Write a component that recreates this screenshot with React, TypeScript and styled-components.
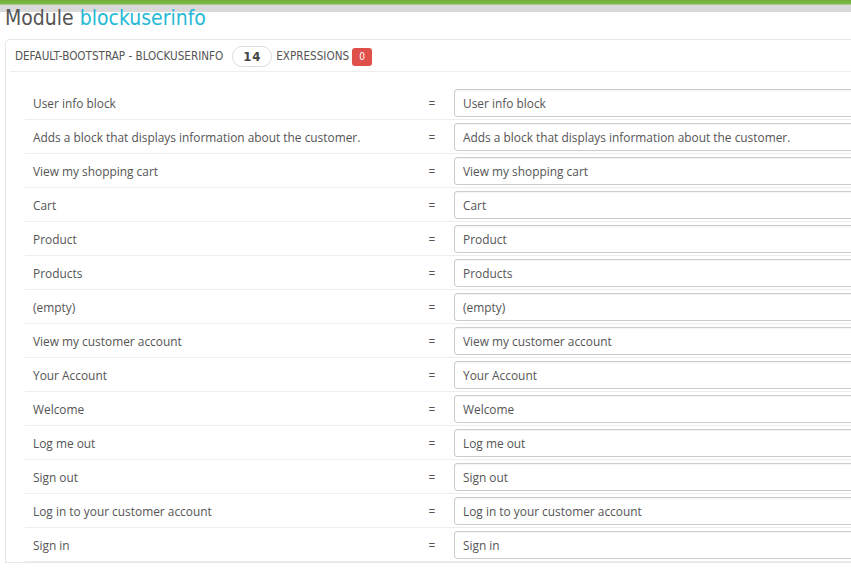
import React from 'react';
import styled, { createGlobalStyle } from 'styled-components';

const GlobalStyle = createGlobalStyle`
  html, body {
    margin: 0;
    padding: 0;
    overflow: hidden;
  }
  html {
    background: #fff linear-gradient(#6fae3a 0, #7cbc45 4px, #d9d9d9 5px, #d9d9d9 12px) no-repeat;
    background-size: 100% 12px;
  }
  body {
    font-family: "Open Sans", "Liberation Sans", sans-serif;
    color: #555;
  }
`;

const Page = styled.div`
  width: 1100px;
  padding-top: 4px;
`;

const Title = styled.h1`
  margin: 0 0 0 5px;
  font-family: "DejaVu Sans Condensed", "Liberation Sans Narrow", "Liberation Sans", sans-serif;
  font-weight: normal;
  font-size: 21px;
  line-height: 28px;
  color: #555;

  span {
    color: #25b9d7;
  }
`;

const Panel = styled.section`
  margin: 7px 0 0 5px;
  border: 1px solid #e6e6e6;
  border-right: none;
  border-radius: 5px 0 0 0;
  background: #fff;
`;

const PanelHeader = styled.div`
  display: flex;
  align-items: center;
  height: 31px;
  margin-left: 4px;
  padding-left: 5px;
  border-bottom: 1px solid #eee;
  font-family: "DejaVu Sans Condensed", "Liberation Sans Narrow", "Liberation Sans", sans-serif;
  font-size: 11.6px;
  text-transform: uppercase;
  color: #555;
`;

const CountBadge = styled.span`
  display: inline-flex;
  align-items: center;
  justify-content: center;
  width: 38px;
  height: 19px;
  margin: 1px 4px 0 9px;
  border: 1px solid #ddd;
  border-radius: 10px;
  font-weight: bold;
  font-size: 13px;
  letter-spacing: 1px;
  color: #444;
`;

const AlertBadge = styled.span`
  display: inline-flex;
  align-items: center;
  justify-content: center;
  width: 20px;
  height: 18px;
  margin: 2px 0 0 3px;
  border-radius: 3px;
  background: #e0504a;
  color: #fff;
  font-size: 10px;
`;

const Table = styled.div`
  margin: 14px 0 0 19px;
`;

const Row = styled.div`
  display: grid;
  grid-template-columns: 392px 30px 1fr;
  align-items: center;
  height: 33px;
  border-bottom: 1px solid #eee;
  font-size: 11.9px;
`;

const Label = styled.div`
  padding-left: 8px;
  white-space: nowrap;
`;

const Eq = styled.div`
  text-align: center;
`;

const Field = styled.input`
  box-sizing: border-box;
  width: 600px;
  height: 28px;
  margin-left: 7px;
  padding: 0 8px;
  border: 1px solid #ccc;
  border-radius: 3px;
  box-shadow: inset 0 1px 1px rgba(0, 0, 0, 0.05);
  font-family: "Open Sans", "Liberation Sans", sans-serif;
  font-size: 11.9px;
  color: #555;
  background: #fff;
`;

const rows = [
  'User info block',
  'Adds a block that displays information about the customer.',
  'View my shopping cart',
  'Cart',
  'Product',
  'Products',
  '(empty)',
  'View my customer account',
  'Your Account',
  'Welcome',
  'Log me out',
  'Sign out',
  'Log in to your customer account',
  'Sign in',
];

export default function App() {
  return (
    <Page>
      <GlobalStyle />
      <Title>
        Module <span>blockuserinfo</span>
      </Title>
      <Panel>
        <PanelHeader>
          default-bootstrap - blockuserinfo
          <CountBadge>14</CountBadge>
          expressions
          <AlertBadge>0</AlertBadge>
        </PanelHeader>
        <Table>
          {rows.map((text) => (
            <Row key={text}>
              <Label>{text}</Label>
              <Eq>=</Eq>
              <Field defaultValue={text} readOnly />
            </Row>
          ))}
        </Table>
      </Panel>
    </Page>
  );
}
